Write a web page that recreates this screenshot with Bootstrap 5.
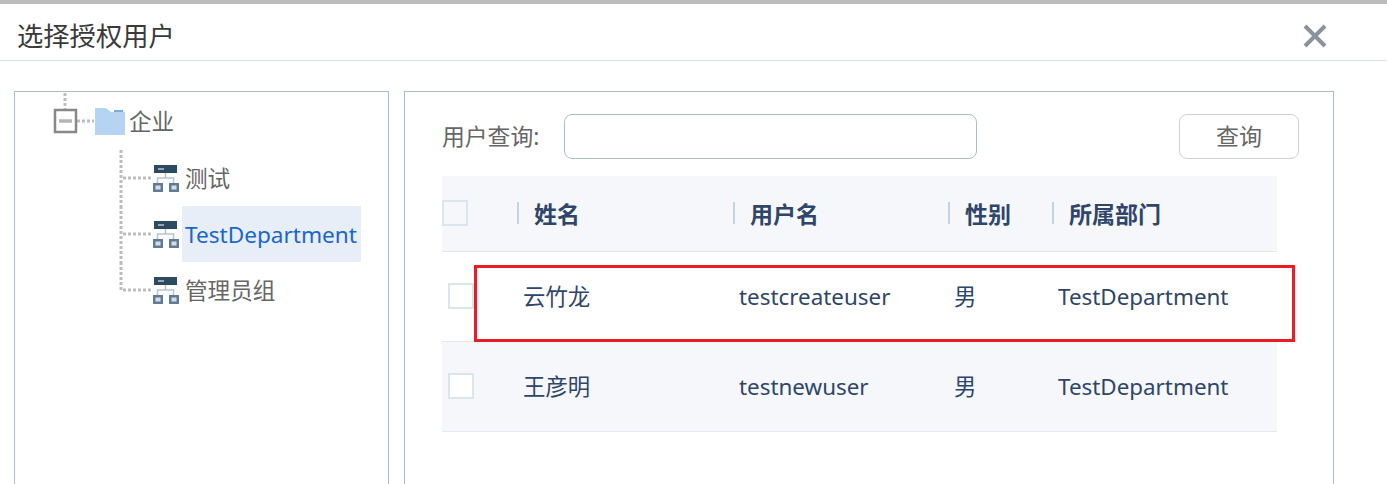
<!DOCTYPE html>
<html lang="zh-CN">
<head>
    <meta charset="UTF-8">
    <meta name="viewport" content="width=device-width, initial-scale=1.0">
    <title>选择授权用户</title>
    <link href="https://cdn.jsdelivr.net/npm/bootstrap@5.3.0/dist/css/bootstrap.min.css" rel="stylesheet">
    <style>
        html, body { height: 484px; overflow: hidden; }
        body { font-family: "Noto Sans", "Noto Sans CJK SC", sans-serif; background: #fff; }
        .dlg-wrap { height: 484px; border-top: 4px solid #bdbdbd; }
        .dlg-head { height: 57px; border-bottom: 1px solid #d8e0ec; padding: 7px 60px 0 17px; }
        .dlg-title { font-size: 26.300px; font-weight: 400; color: #3a3a3a; margin: 2px 0 0; line-height: 1; }
        .dlg-close { background: none; border: 0; padding: 0; width: 24px; height: 24px; line-height: 0; }
        .dlg-body { padding: 30px 53px 0 14px; gap: 15px; height: 423px; }
        .side-panel { width: 375px; border: 1px solid #a9bbcd; border-bottom: 0; }
        .main-panel { flex: 1; border: 1px solid #a9bbcd; border-bottom: 0; padding: 22px 34px 0 37px; }
        .tree-top { height: 58px; padding-left: 38px; font-size: 22.600px; color: #666; }
        .tree-top-text { margin: 2px 0 0 4px; }
        .tree-row { height: 56px; padding-left: 104px; font-size: 22.600px; color: #666; }
        .org-icon { margin-left: 1px; flex: none; }
        .tree-label { height: 56px; padding: 2px 4px 0 3px; margin-left: 3px; }
        .tree-label.is-active { background: #e8eef8; color: #1a66c9; }
        .query-label { width: 122px; font-size: 22.800px; color: #666; margin-top: 2px; margin-bottom: 0; }
        .query-input { width: 413px; height: 45px; border: 1px solid #a9bdd0; border-radius: 8px; }
        .query-btn { width: 120px; height: 45px; border: 1px solid #ccd1d6; border-radius: 8px; font-size: 23px; color: #666; background: #fff; padding: 0; line-height: 1; }
        .user-table { width: 835px; margin: 17px 0 0; table-layout: fixed; color: #2f4569; font-size: 22.400px; border-collapse: collapse; }
        .user-table th, .user-table td { padding: 0 0 0 5px; vertical-align: middle; border-bottom: 1px solid #e4e9f0; background: transparent; color: inherit; box-shadow: none; }
        .user-table td:not(:first-child) { padding-top: 2px; }
        .user-table thead tr { height: 75px; background: #f5f7fb; }
        .user-table tbody tr { height: 90px; }
        .user-table tr.is-even { background: #f5f7fb; }
        .user-table th { font-weight: 700; font-size: 23px; }
        .head-cell { border-left: 2px solid #c2d3e2; height: 22px; line-height: 24px; padding-left: 15px; margin-left: -6px; }
        .tick { display: block; width: 26px; height: 26px; border: 2px solid #dce4ec; background: #fff; }
        .head-tick { background: #f5f7fb; margin-left: -5px; }
        .row-tick { margin-left: 1px; }
        .mark-box { position: absolute; left: 69px; top: 173px; width: 821px; height: 77px; border: 3px solid #ed1c24; pointer-events: none; }
    </style>
</head>
<body>
    <div class="dlg-wrap">
        <div class="dlg-head d-flex align-items-center justify-content-between">
            <h5 class="dlg-title">选择授权用户</h5>
            <button class="dlg-close" type="button" aria-label="关闭">
                <svg width="24" height="24" viewBox="0 0 24 24"><path d="M2 2 22 22M22 2 2 22" stroke="#8a939c" stroke-width="4" fill="none"/></svg>
            </button>
        </div>

        <div class="dlg-body d-flex">
            <!-- 左侧部门树 -->
            <div class="side-panel">
                <div class="tree-top d-flex align-items-center">
                    <svg width="42" height="58" viewBox="0 0 42 58">
                        <path d="M12 1V18M24 29H41" stroke="#bdbdbd" stroke-width="3" stroke-dasharray="3 2" fill="none"/>
                        <rect x="2" y="18" width="21" height="22" fill="#fff" stroke="#888" stroke-width="2.500"/>
                        <path d="M6 29H19" stroke="#b5b5b5" stroke-width="3.500"/>
                    </svg>
                    <svg width="30" height="27" viewBox="0 0 30 27">
                        <path d="M0 0H11L16 4H30V27H0Z" fill="#b5d3f3"/>
                        <path d="M19 3H28" stroke="#4a90d9" stroke-width="1.500"/>
                    </svg>
                    <span class="tree-top-text">企业</span>
                </div>
                <div class="tree-row d-flex align-items-center">
                    <svg width="32" height="56" viewBox="0 0 32 56"><path d="M2 0V56M4 28H32" stroke="#bdbdbd" stroke-width="3" stroke-dasharray="3 2" fill="none"/></svg>
                    <svg class="org-icon" width="27" height="27" viewBox="0 0 27 27"><rect x="2" y="0" width="23" height="8" fill="#2d4a63"/><path d="M6 4H12" stroke="#fff"/><path d="M13.500 8V13M5.500 19V13H21.500V19" stroke="#b8c3cc" stroke-width="1.500" fill="none"/><rect x="1" y="18" width="10" height="9" fill="#607b94"/><rect x="17" y="18" width="10" height="9" fill="#607b94"/><rect x="3.500" y="20.500" width="5" height="4" fill="#d5dde4"/><rect x="19.500" y="20.500" width="5" height="4" fill="#d5dde4"/></svg>
                    <span class="tree-label d-flex align-items-center">测试</span>
                </div>
                <div class="tree-row d-flex align-items-center">
                    <svg width="32" height="56" viewBox="0 0 32 56"><path d="M2 0V56M4 28H32" stroke="#bdbdbd" stroke-width="3" stroke-dasharray="3 2" fill="none"/></svg>
                    <svg class="org-icon" width="27" height="27" viewBox="0 0 27 27"><rect x="2" y="0" width="23" height="8" fill="#2d4a63"/><path d="M6 4H12" stroke="#fff"/><path d="M13.500 8V13M5.500 19V13H21.500V19" stroke="#b8c3cc" stroke-width="1.500" fill="none"/><rect x="1" y="18" width="10" height="9" fill="#607b94"/><rect x="17" y="18" width="10" height="9" fill="#607b94"/><rect x="3.500" y="20.500" width="5" height="4" fill="#d5dde4"/><rect x="19.500" y="20.500" width="5" height="4" fill="#d5dde4"/></svg>
                    <span class="tree-label is-active d-flex align-items-center">TestDepartment</span>
                </div>
                <div class="tree-row d-flex align-items-center">
                    <svg width="32" height="56" viewBox="0 0 32 56"><path d="M2 0V28M4 28H32" stroke="#bdbdbd" stroke-width="3" stroke-dasharray="3 2" fill="none"/></svg>
                    <svg class="org-icon" width="27" height="27" viewBox="0 0 27 27"><rect x="2" y="0" width="23" height="8" fill="#2d4a63"/><path d="M6 4H12" stroke="#fff"/><path d="M13.500 8V13M5.500 19V13H21.500V19" stroke="#b8c3cc" stroke-width="1.500" fill="none"/><rect x="1" y="18" width="10" height="9" fill="#607b94"/><rect x="17" y="18" width="10" height="9" fill="#607b94"/><rect x="3.500" y="20.500" width="5" height="4" fill="#d5dde4"/><rect x="19.500" y="20.500" width="5" height="4" fill="#d5dde4"/></svg>
                    <span class="tree-label d-flex align-items-center">管理员组</span>
                </div>
            </div>

            <!-- 右侧用户列表 -->
            <div class="main-panel position-relative">
                <div class="d-flex align-items-center">
                    <label class="query-label" for="user-query">用户查询:</label>
                    <input id="user-query" class="query-input form-control" type="text">
                    <button class="query-btn btn ms-auto" type="button">查询</button>
                </div>
                <table class="table user-table">
                    <colgroup><col style="width:76px"><col style="width:216px"><col style="width:215px"><col style="width:104px"><col style="width:224px"></colgroup>
                    <thead>
                        <tr>
                            <th><span class="tick head-tick"></span></th>
                            <th><div class="head-cell">姓名</div></th>
                            <th><div class="head-cell">用户名</div></th>
                            <th><div class="head-cell">性别</div></th>
                            <th><div class="head-cell">所属部门</div></th>
                        </tr>
                    </thead>
                    <tbody>
                        <tr>
                            <td><span class="tick row-tick"></span></td>
                            <td>云竹龙</td>
                            <td>testcreateuser</td>
                            <td>男</td>
                            <td>TestDepartment</td>
                        </tr>
                        <tr class="is-even">
                            <td><span class="tick row-tick"></span></td>
                            <td>王彦明</td>
                            <td>testnewuser</td>
                            <td>男</td>
                            <td>TestDepartment</td>
                        </tr>
                    </tbody>
                </table>
                <div class="mark-box"></div>
            </div>
        </div>
    </div>

    <script src="https://cdn.jsdelivr.net/npm/bootstrap@5.3.0/dist/js/bootstrap.bundle.min.js"></script>
</body>
</html>
